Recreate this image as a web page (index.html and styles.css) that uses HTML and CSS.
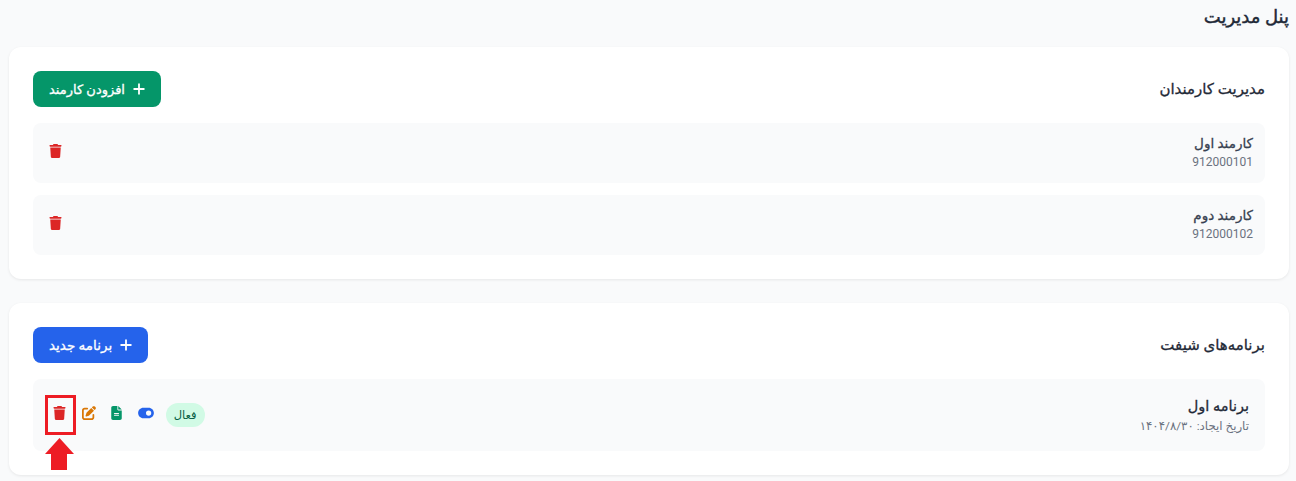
FILE: index.html
```html
<!doctype html>
<html lang="fa" dir="rtl">
  <head>
    <meta charset="UTF-8" />
    <meta name="viewport" content="width=device-width, initial-scale=1.0" />
    <title>پنل مدیریت</title>
    <link rel="stylesheet" href="styles.css">
  </head>
  <body>
    <h1 class="page-title">پنل مدیریت</h1>

    <section class="card">
      <div class="card-head">
        <h2>مدیریت کارمندان</h2>
        <button class="btn btn-green">
          <svg class="plus-icon" viewBox="0 0 12 12"><path d="M6 .5v11M.5 6h11"></path></svg>
          افزودن کارمند
        </button>
      </div>
      <ul class="rows">
        <li class="row">
          <div>
            <div class="name">کارمند اول</div>
            <div class="phone">912000101</div>
          </div>
          <svg class="icon icon-red" viewBox="0 0 448 512"><path d="M135.2 17.7L128 32H32C14.3 32 0 46.3 0 64S14.3 96 32 96H416c17.7 0 32-14.3 32-32s-14.3-32-32-32H320l-7.2-14.3C307.4 6.8 296.3 0 284.2 0H163.8c-12.1 0-23.2 6.8-28.6 17.7zM416 128H32L53.2 467c1.6 25.3 22.6 45 47.9 45H346.9c25.3 0 46.3-19.7 47.9-45L416 128z"></path></svg>
        </li>
        <li class="row">
          <div>
            <div class="name">کارمند دوم</div>
            <div class="phone">912000102</div>
          </div>
          <svg class="icon icon-red" viewBox="0 0 448 512"><path d="M135.2 17.7L128 32H32C14.3 32 0 46.3 0 64S14.3 96 32 96H416c17.7 0 32-14.3 32-32s-14.3-32-32-32H320l-7.2-14.3C307.4 6.8 296.3 0 284.2 0H163.8c-12.1 0-23.2 6.8-28.6 17.7zM416 128H32L53.2 467c1.6 25.3 22.6 45 47.9 45H346.9c25.3 0 46.3-19.7 47.9-45L416 128z"></path></svg>
        </li>
      </ul>
    </section>

    <section class="card">
      <div class="card-head">
        <h2>برنامه‌های شیفت</h2>
        <button class="btn btn-blue">
          <svg class="plus-icon" viewBox="0 0 12 12"><path d="M6 .5v11M.5 6h11"></path></svg>
          برنامه جدید
        </button>
      </div>
      <ul class="rows">
        <li class="row row-plan">
          <div>
            <div class="plan-name">برنامه اول</div>
            <div class="plan-date">تاریخ ایجاد: ۱۴۰۴/۸/۳۰</div>
          </div>
          <div class="actions">
            <span class="badge">فعال</span>
            <svg class="icon icon-toggle" viewBox="0 0 576 512"><path d="M192 64C86 64 0 150 0 256S86 448 192 448H384c106 0 192-86 192-192s-86-192-192-192H192zm192 96a96 96 0 1 1 0 192 96 96 0 1 1 0-192z"></path></svg>
            <svg class="icon icon-green" viewBox="0 0 384 512"><path d="M64 0C28.7 0 0 28.7 0 64V448c0 35.3 28.7 64 64 64H320c35.3 0 64-28.7 64-64V160H256c-17.7 0-32-14.3-32-32V0H64zM256 0V128H384L256 0zM112 256H272c8.8 0 16 7.2 16 16s-7.2 16-16 16H112c-8.8 0-16-7.2-16-16s7.2-16 16-16zm0 64H272c8.8 0 16 7.2 16 16s-7.2 16-16 16H112c-8.8 0-16-7.2-16-16s7.2-16 16-16z"></path></svg>
            <svg class="icon icon-orange" viewBox="0 0 512 512"><path d="M471.6 21.7c-21.9-21.9-57.3-21.9-79.2 0L362.3 51.7l97.9 97.9 30.1-30.1c21.9-21.9 21.9-57.3 0-79.2L471.6 21.7zm-299.2 220c-6.1 6.1-10.8 13.6-13.5 21.9l-29.6 88.8c-2.9 8.6-.6 18.1 5.8 24.6s15.9 8.7 24.6 5.8l88.8-29.6c8.2-2.7 15.7-7.4 21.9-13.5L437.7 172.3 339.7 74.3 172.4 241.7zM96 64C43 64 0 107 0 160V416c0 53 43 96 96 96H352c53 0 96-43 96-96V320c0-17.7-14.3-32-32-32s-32 14.3-32 32v96c0 17.7-14.3 32-32 32H96c-17.7 0-32-14.3-32-32V160c0-17.7 14.3-32 32-32h96c17.7 0 32-14.3 32-32s-14.3-32-32-32H96z"></path></svg>
            <svg class="icon icon-red" viewBox="0 0 448 512"><path d="M135.2 17.7L128 32H32C14.3 32 0 46.3 0 64S14.3 96 32 96H416c17.7 0 32-14.3 32-32s-14.3-32-32-32H320l-7.2-14.3C307.4 6.8 296.3 0 284.2 0H163.8c-12.1 0-23.2 6.8-28.6 17.7zM416 128H32L53.2 467c1.6 25.3 22.6 45 47.9 45H346.9c25.3 0 46.3-19.7 47.9-45L416 128z"></path></svg>
          </div>
        </li>
      </ul>
    </section>

    <!-- annotation drawn over the delete button -->
    <div class="mark-box"></div>
    <svg class="mark-arrow" viewBox="0 0 29 32"><path d="M14.5 0L29 16H22V32H6V16H0z"></path></svg>
  </body>
</html>
```

FILE: styles.css
```css
:root {
  --color-bg: #f9fafb;
  --color-text: #1f2937;
  --color-text-alt: #6b7280;
  --color-red: #dc2626;
}

html,
body {
  height: 481px;
  overflow: hidden;
}

body {
  position: relative;
  box-sizing: border-box;
  margin: 0;
  padding: 0 7px 0 9px;
  background-color: var(--color-bg);
  color: var(--color-text);
  font-family: Roboto, "DejaVu Sans", sans-serif;
}

.page-title {
  margin: 0 0 18px;
  height: 29px;
  font-size: 18px;
  line-height: 33px;
  font-weight: 400;
  -webkit-text-stroke: 0.4px currentColor;
}

.card {
  box-sizing: border-box;
  margin-bottom: 24px;
  padding: 24px;
  background-color: #fff;
  border-radius: 12px;
  box-shadow: 0 1px 3px rgba(0, 0, 0, 0.08);
}

.card-head {
  display: flex;
  align-items: center;
  justify-content: space-between;
  margin-bottom: 16px;
}

.card-head h2 {
  margin: 0;
  font-size: 15px;
  font-weight: 400;
  -webkit-text-stroke: 0.3px currentColor;
}

.btn {
  display: flex;
  align-items: center;
  gap: 8px;
  height: 36px;
  padding: 0 16px;
  border: none;
  border-radius: 8px;
  color: #fff;
  font-family: inherit;
  font-size: 13px;
  font-weight: 400;
  -webkit-text-stroke: 0.3px currentColor;
}

.btn-green {
  background-color: #059669;
}

.btn-blue {
  background-color: #2563eb;
  font-size: 13.5px;
}

.plus-icon {
  width: 12px;
  height: 12px;
  fill: none;
  stroke: currentColor;
  stroke-width: 1.8;
}

.rows {
  display: flex;
  flex-direction: column;
  gap: 12px;
  margin: 0;
  padding: 0;
  list-style: none;
}

.row {
  display: flex;
  align-items: center;
  justify-content: space-between;
  box-sizing: border-box;
  height: 60px;
  padding: 0 12px 0 16px;
  background-color: var(--color-bg);
  border-radius: 8px;
}

.row > .icon {
  margin-bottom: 4px;
}

.row-plan {
  height: 72px;
  padding: 0 16px 0 20px;
}

.name {
  font-size: 13.5px;
  line-height: 19px;
  margin-top: -1px;
  color: #374151;
  -webkit-text-stroke: 0.3px currentColor;
}

.phone {
  font-size: 12px;
  line-height: 17px;
  margin-top: 1px;
  color: var(--color-text-alt);
}

.plan-name {
  font-size: 14.5px;
  line-height: 22px;
  color: var(--color-text);
  -webkit-text-stroke: 0.3px currentColor;
}

.plan-date {
  font-size: 11.8px;
  line-height: 17px;
  color: var(--color-text-alt);
}

.actions {
  display: flex;
  align-items: center;
  gap: 15.67px;
}

.actions .icon {
  margin-bottom: 4px;
}

.icon {
  display: block;
  height: 14px;
  fill: currentColor;
}

.icon-red {
  width: 13px;
  color: var(--color-red);
}

.icon-orange {
  width: 14px;
  color: #d97706;
}

.icon-green {
  width: 11px;
  color: #059669;
}

.icon-toggle {
  width: 16px;
  color: #2563eb;
}

.badge {
  margin-left: -4px;
  padding: 0 8px;
  height: 24px;
  border-radius: 12px;
  background-color: #d1fae5;
  color: #065f46;
  font-size: 11.5px;
  line-height: 24px;
}

.mark-box {
  position: absolute;
  left: 45px;
  top: 395px;
  box-sizing: border-box;
  width: 31px;
  height: 40px;
  border: 3px solid #ed1c24;
}

.mark-arrow {
  position: absolute;
  left: 45px;
  top: 438px;
  width: 29px;
  height: 32px;
  fill: #ed1c24;
}
```
